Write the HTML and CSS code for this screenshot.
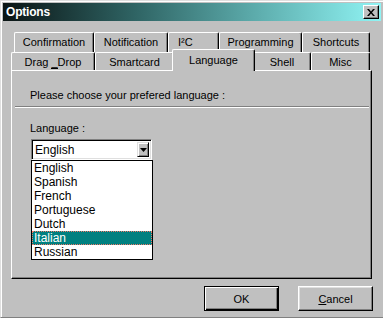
FILE: index.html
```html
<!DOCTYPE html>
<html lang="en">
  <head>
    <meta charset="UTF-8" />
    <title>Options</title>
    <link rel="stylesheet" href="styles.css">
  </head>
  <body>
    <div class="window">
      <div class="titlebar">
        <span class="title">Options</span>
        <button class="close" aria-label="Close">
          <svg width="8" height="7" viewBox="0 0 8 7"><path d="M0 0h2l2 2.5L6 0h2L5 3.5 8 7H6L4 4.5 2 7H0l3-3.5z" fill="#000"/></svg>
        </button>
      </div>

      <div class="tabs">
        <div class="tab-row back">
          <div class="tab w-confirm">Confirmation</div>
          <div class="tab w-notif">Notification</div>
          <div class="tab w-i2c">I²C</div>
          <div class="tab w-prog">Programming</div>
          <div class="tab w-short">Shortcuts</div>
        </div>
        <div class="tab-row front">
          <div class="tab w-drag">Drag <u>_</u>Drop</div>
          <div class="tab w-smart">Smartcard</div>
          <div class="tab w-lang selected">Language</div>
          <div class="tab w-shell">Shell</div>
          <div class="tab w-misc">Misc</div>
        </div>
      </div>

      <div class="panel">
        <div class="intro">Please choose your prefered language :</div>
        <div class="separator"></div>
        <div class="field-label">Language :</div>
        <div class="combo">
          <div class="combo-box">
            <span class="combo-value">English</span>
            <span class="combo-arrow">
              <svg width="7" height="4" viewBox="0 0 7 4"><path d="M0 0h7L3.5 4z" fill="#000"/></svg>
            </span>
          </div>
          <ul class="dropdown">
            <li>English</li>
            <li>Spanish</li>
            <li>French</li>
            <li>Portuguese</li>
            <li>Dutch</li>
            <li class="active">Italian</li>
            <li>Russian</li>
          </ul>
        </div>
      </div>

      <div class="buttons">
        <button class="btn default">OK</button>
        <button class="btn"><u>C</u>ancel</button>
      </div>
    </div>
  </body>
</html>
```

FILE: styles.css
```css
body {
  margin: 0;
  font-family: "Liberation Sans", Arial, sans-serif;
  font-size: 11px;
  color: #000;
  background-color: #c0c0c0;
}

.window {
  width: 383px;
  height: 318px;
  box-sizing: border-box;
  border-top: 1px solid #dfdfdf;
  border-left: 1px solid #dfdfdf;
  border-bottom: 1px solid #808080;
  box-shadow: inset 1px 1px 0 #fff;
  background-color: #c0c0c0;
  overflow: hidden;
}

.titlebar {
  margin: 2px 2px 0 2px;
  height: 18px;
  display: flex;
  align-items: center;
  justify-content: space-between;
  padding: 0 2px 0 3px;
  background: linear-gradient(to right, #0a1414, #2f6464 35%, #5aa8a8 65%, #90f4f4);
}

.title {
  color: #fff;
  font-weight: bold;
  font-size: 12px;
  letter-spacing: -0.2px;
}

.close {
  width: 16px;
  height: 14px;
  padding: 0;
  display: flex;
  align-items: center;
  justify-content: center;
  background-color: #c0c0c0;
  border: 1px solid;
  border-color: #fff #000 #000 #fff;
  box-shadow: inset -1px -1px 0 #808080;
}

.tabs {
  margin: 11px 0 0 10px;
}

.tab-row {
  display: flex;
}

.tab-row.back {
  margin-left: 3px;
  height: 20px;
}

.tab-row.front {
  height: 18px;
}

.tab {
  box-sizing: border-box;
  text-align: center;
  background-color: #c0c0c0;
  border-top: 1px solid #fff;
  border-left: 1px solid #fff;
  border-right: 1px solid #000;
  border-radius: 2px 2px 0 0;
  box-shadow: inset -1px 0 0 #808080;
  padding-top: 3px;
}

.tab.selected {
  position: relative;
  z-index: 1;
  margin: -3px -2px -1px -2px;
  padding-top: 4px;
}

.w-confirm { width: 80px; }
.w-notif { width: 74px; }
.w-i2c { width: 51px; text-align: left; padding-left: 9px; }
.w-prog { width: 83px; }
.w-short { width: 68px; }
.w-drag { width: 84px; }
.w-smart { width: 79px; }
.w-lang { width: 83px; }
.w-shell { width: 58px; }
.w-misc { width: 59px; }

.w-drag u {
  text-decoration: none;
  border-bottom: 1px solid #000;
}

.panel {
  margin-left: 10px;
  width: 361px;
  height: 209px;
  box-sizing: border-box;
  border-top: 1px solid #fff;
  border-left: 1px solid #fff;
  border-right: 1px solid #000;
  border-bottom: 1px solid #000;
  box-shadow: inset -1px -1px 0 #808080;
  padding-top: 18px;
}

.intro {
  margin-left: 18px;
  line-height: 13px;
}

.separator {
  margin: 4px 2px 0 3px;
  border-top: 1px solid #808080;
  border-bottom: 1px solid #fff;
}

.field-label {
  margin: 14px 0 0 18px;
  line-height: 13px;
}

.combo {
  position: relative;
  margin: 4px 0 0 19px;
  width: 121px;
}

.combo-box {
  height: 21px;
  box-sizing: border-box;
  display: flex;
  align-items: center;
  justify-content: space-between;
  background-color: #fff;
  border: 1px solid;
  border-color: #808080 #fff #fff #808080;
  box-shadow: inset 1px 1px 0 #000, inset -1px -1px 0 #dfdfdf;
  padding: 0 2px 0 3px;
}

.combo-value {
  font-size: 12px;
  padding-top: 1px;
}

.combo-arrow {
  width: 12px;
  height: 15px;
  box-sizing: border-box;
  display: flex;
  align-items: center;
  justify-content: center;
  background-color: #c0c0c0;
  border: 1px solid;
  border-color: #dfdfdf #000 #000 #dfdfdf;
  box-shadow: inset 1px 1px 0 #fff, inset -1px -1px 0 #808080;
}

.dropdown {
  position: absolute;
  top: 21px;
  left: 0;
  width: 122px;
  box-sizing: border-box;
  margin: 0;
  padding: 0;
  list-style: none;
  background-color: #fff;
  border: 1px solid #000;
}

.dropdown li {
  height: 14px;
  line-height: 14px;
  padding-left: 2px;
  box-sizing: border-box;
  font-size: 12px;
}

.dropdown li.active {
  background-color: #008080;
  color: #fff;
  border: 1px dotted #f07868;
  line-height: 12px;
  padding-left: 1px;
}

.buttons {
  display: flex;
  justify-content: flex-end;
  gap: 19px;
  margin: 7px 10px 0 0;
}

.btn {
  width: 75px;
  height: 25px;
  padding: 0;
  font-family: "Liberation Sans", Arial, sans-serif;
  font-size: 11px;
  color: #000;
  background-color: #c0c0c0;
  border: 1px solid;
  border-color: #fff #000 #000 #fff;
  box-shadow: inset -1px -1px 0 #808080, inset 1px 1px 0 #dfdfdf;
}

.btn.default {
  border: 1px solid #000;
  box-shadow: inset 1px 1px 0 #fff, inset -1px -1px 0 #000, inset -2px -2px 0 #808080;
}
```
